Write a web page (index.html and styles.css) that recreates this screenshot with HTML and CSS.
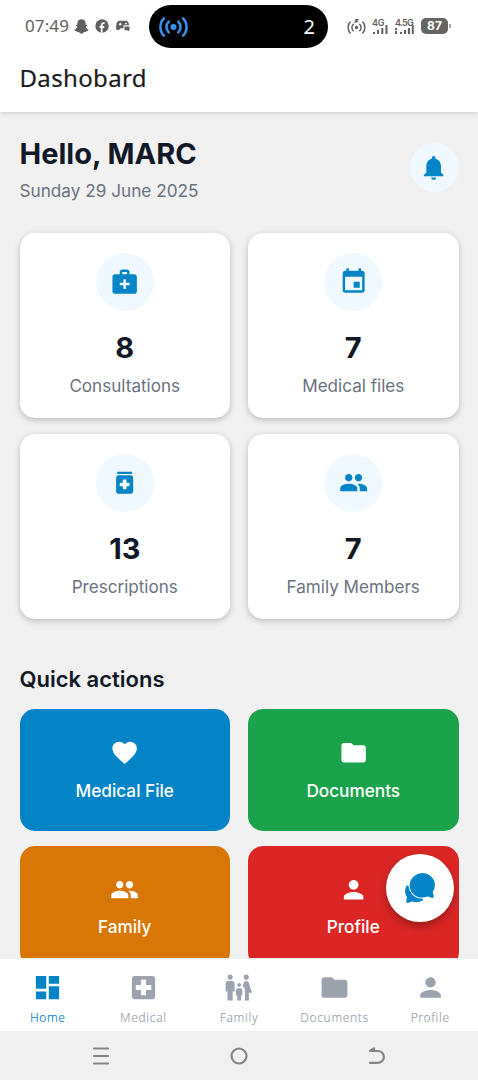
FILE: index.html
```html
<!DOCTYPE html>
<html lang="en">
<head>
<meta charset="utf-8">
<title>Dashobard</title>
<link rel="stylesheet" href="styles.css">
</head>
<body>
<svg class="defs" width="0" height="0" aria-hidden="true">
  <symbol id="bag" viewBox="0 0 24 24"><path d="M20 6h-4V4c0-1.1-.9-2-2-2h-4c-1.1 0-2 .9-2 2v2H4c-1.1 0-2 .9-2 2v12c0 1.1.9 2 2 2h16c1.1 0 2-.9 2-2V8c0-1.1-.9-2-2-2zM10 4h4v2h-4V4zm6 11h-3v3h-2v-3H8v-2h3v-3h2v3h3v2z"/></symbol>
  <symbol id="event" viewBox="0 0 24 24"><path d="M17 12h-5v5h5v-5zM16 1v2H8V1H6v2H5c-1.11 0-1.99.9-1.99 2L3 19c0 1.1.89 2 2 2h14c1.1 0 2-.9 2-2V5c0-1.1-.9-2-2-2h-1V1h-2zm3 18H5V8h14v11z"/></symbol>
  <symbol id="medication" viewBox="0 0 24 24"><path d="M6 3h12v2H6zm11 3H7c-1.1 0-2 .9-2 2v11c0 1.1.9 2 2 2h10c1.1 0 2-.9 2-2V8c0-1.1-.9-2-2-2zm-1 9h-2.5v2.5h-3V15H8v-3h2.5V9.5h3V12H16v3z"/></symbol>
  <symbol id="people" viewBox="0 0 24 24"><path d="M16 11c1.66 0 2.99-1.34 2.99-3S17.66 5 16 5c-1.66 0-3 1.34-3 3s1.34 3 3 3zm-8 0c1.66 0 2.99-1.34 2.99-3S9.66 5 8 5C6.34 5 5 6.34 5 8s1.34 3 3 3zm0 2c-2.33 0-7 1.17-7 3.5V19h14v-2.5c0-2.33-4.67-3.5-7-3.5zm8 0c-.29 0-.62.02-.97.05 1.16.84 1.97 1.97 1.97 3.45V19h6v-2.5c0-2.33-4.67-3.5-7-3.5z"/></symbol>
  <symbol id="bell" viewBox="0 0 24 24"><path d="M12 22c1.1 0 2-.9 2-2h-4c0 1.1.89 2 2 2zm6-6v-5c0-3.07-1.64-5.64-4.5-6.32V4c0-.83-.67-1.5-1.5-1.5s-1.5.67-1.5 1.5v.68C7.63 5.36 6 7.92 6 11v5l-2 2v1h16v-1l-2-2z"/></symbol>
  <symbol id="heart" viewBox="0 0 24 24"><path d="M12 21.35l-1.45-1.32C5.4 15.36 2 12.28 2 8.5 2 5.42 4.42 3 7.5 3c1.74 0 3.41.81 4.5 2.09C13.09 3.81 14.76 3 16.5 3 19.58 3 22 5.42 22 8.5c0 3.78-3.4 6.86-8.55 11.54L12 21.35z"/></symbol>
  <symbol id="folder" viewBox="0 0 24 24"><path d="M10 4H4c-1.1 0-1.99.9-1.99 2L2 18c0 1.1.9 2 2 2h16c1.1 0 2-.9 2-2V8c0-1.1-.9-2-2-2h-8l-2-2z"/></symbol>
  <symbol id="person" viewBox="0 0 24 24"><path d="M12 12c2.21 0 4-1.79 4-4s-1.79-4-4-4-4 1.79-4 4 1.79 4 4 4zm0 2c-2.67 0-8 1.34-8 4v2h16v-2c0-2.66-5.33-4-8-4z"/></symbol>
  <symbol id="dashboard" viewBox="0 0 24 24"><path d="M3 13h8V3H3v10zm0 8h8v-6H3v6zm10 0h8V11h-8v10zm0-18v6h8V3h-8z"/></symbol>
  <symbol id="hospital" viewBox="0 0 24 24"><path d="M19 3H5c-1.1 0-1.99.9-1.99 2L3 19c0 1.1.9 2 2 2h14c1.1 0 2-.9 2-2V5c0-1.1-.9-2-2-2zm-1 11h-4v4h-4v-4H6v-4h4V6h4v4h4v4z"/></symbol>
  <symbol id="restroom" viewBox="0 0 24 24"><path d="M16 4c0-1.11.89-2 2-2s2 .89 2 2-.89 2-2 2-2-.89-2-2zm4 18v-6h2.500l-2.540-7.630A2.010 2.010 0 0 0 18.060 7h-.12a2 2 0 0 0-1.900 1.370l-.86 2.580c1.080.6 1.820 1.730 1.820 3.050v8h3zm-7.500-10.500c.83 0 1.500-.67 1.500-1.500s-.67-1.500-1.500-1.500S11 9.170 11 10s.67 1.500 1.500 1.500zM5.500 6c1.110 0 2-.89 2-2s-.89-2-2-2-2 .89-2 2 .89 2 2 2zm2 16v-7H9V9c0-1.100-.9-2-2-2H4c-1.100 0-2 .9-2 2v6h1.500v7h4zm6.500 0v-4h1v-4c0-.82-.68-1.500-1.500-1.500h-2c-.82 0-1.500.68-1.500 1.500v4h1v4h3z"/></symbol>
  <symbol id="chat" viewBox="0 0 512 512"><path d="M439.900 405.600a26.770 26.770 0 0 1-9.590-2l-56.780-20.130-.42-.17a9.880 9.880 0 0 0-3.910-.76 10.320 10.320 0 0 0-3.620.66c-1.380.52-13.810 5.190-26.850 8.770-7.070 1.940-31.680 8.270-51.430 8.270-50.480 0-97.680-19.400-132.890-54.630A183.380 183.380 0 0 1 100.300 215.100a175.900 175.900 0 0 1 4.060-37.580c8.790-40.620 32.070-77.570 65.550-104A194.760 194.760 0 0 1 290.300 30.500c52.210 0 100.860 20 137 56.180 34.160 34.270 52.880 79.330 52.730 126.870a177.860 177.860 0 0 1-30.300 99.150l-.19.28-.74 1c-.17.23-.34.45-.5.68l-.15.27a21.630 21.630 0 0 0-1.080 2.090l15.740 55.940a26.420 26.420 0 0 1 1.120 7.110 24 24 0 0 1-24.030 25.530z"/><path d="M299.870 425.390a15.740 15.740 0 0 0-10.290-8.100c-5.780-1.530-12.520-1.270-17.670-1.650a201.780 201.780 0 0 1-128.820-58.750A199.210 199.210 0 0 1 86.400 244.160C85 234.420 85 232 85 232a16 16 0 0 0-28-10.580s-7.880 8.580-11.600 17.190a162.090 162.090 0 0 0 11 150.060C59 393 59 395 58.420 399.500c-2.730 14.110-7.510 39-10 51.910a24 24 0 0 0 8 22.920l.46.39A24.340 24.340 0 0 0 72 480a23.420 23.420 0 0 0 9-1.790l53.510-20.650a8.050 8.050 0 0 1 5.720 0c21.070 7.840 43 12 63.780 12a176 176 0 0 0 74.910-16.660c5.460-2.560 14-5.340 19-11.120a15 15 0 0 0 1.950-16.390z"/></symbol>
</svg>

<div class="screen">
  <div class="status">
    <div class="status-left">
      <span class="clock">07:49</span>
      <svg class="snap" viewBox="0 0 14 14"><path d="M7 .3c2.300 0 3.900 1.500 3.900 3.800v1.300c.7-.2 1.500 0 1.400.6-.1.500-.9.700-1.300 1 .5 1.600 1.400 2.500 2.700 3-.2.900-1 1.100-1.900 1.200-.3 1.200-1 .8-2 .9-.9.200-1.400 1.600-2.800 1.600s-1.900-1.400-2.800-1.600c-1-.1-1.700.3-2-.9C1.300 11.100.5 10.900.3 10c1.300-.5 2.200-1.400 2.700-3-.4-.3-1.200-.5-1.300-1-.1-.6.700-.8 1.400-.6V4.100C3.100 1.800 4.700.3 7 .3z"/></svg>
      <svg class="fb" viewBox="0 0 14 14"><circle cx="7" cy="7" r="6.700"/><path d="M6.700 13.700V6.100c0-1.500.8-2.100 2.900-1.900M4.500 8h4.700" fill="none" stroke="#fff" stroke-width="1.800"/></svg>
      <svg class="pad" viewBox="0 0 14 12"><path d="M3.300.8h6.500c1.900 0 3 1.500 3.300 4.500H7.500v3H4.700L3 10H1.200C0 10-.1 8 .2 6 .5 3 1.200.8 3.300.8z"/><path d="M2.800 4.200h2.800M4.200 2.800v2.800M9 3.600h1.800" stroke="#fff" stroke-width="1.100"/><path d="M8.500 6.500h5v3.700h-.7v1.300l-1.500-1.300H8.500z"/></svg>
    </div>
    <div class="island">
      <svg class="beacon" viewBox="0 0 32 24"><circle cx="16" cy="12" r="3.300" fill="#3791f0"/><path d="M10.800 6.200a8 8 0 0 0 0 11.600M21.200 6.200a8 8 0 0 1 0 11.600M5.500 2.500C.5 7.500.5 16.500 5.500 21.500M26.500 2.500c5 5 5 14 0 19" fill="none" stroke="#3791f0" stroke-width="2.800" stroke-linecap="round"/></svg>
      <span>2</span>
    </div>
    <div class="status-right">
      <svg class="hotspot" viewBox="0 0 18 16"><circle cx="9" cy="9" r="1.600"/><path d="M6.300 5.500a4.500 4.500 0 0 0 0 7M11.700 5.500a4.500 4.500 0 0 1 0 7M3.300 3.300c-3 3-3 8 0 11.300M14.700 3.300c3 3 3 8 0 11.300M7.800 1.500h2.200L8 3.600h2.200" fill="none" stroke="#606060" stroke-width="1.400"/></svg>
      <div class="signal"><span>4G</span><svg viewBox="0 0 16 9"><path d="M1 7h2v2H1zM5 5h2v4H5zM9.300 3h2v6h-2zM13.500 0h2v9h-2z"/></svg></div>
      <div class="signal wide"><span>4.5G</span><svg viewBox="0 0 19 9"><path d="M0 3h2v2H0zM0 6h2v3H0zM5 7h2v2H5zM9 5h2v4H9zM13 3h2v6h-2zM16.800 0h2v9h-2z"/></svg></div>
      <div class="battery"><span>87</span></div>
    </div>
  </div>

  <header class="topbar">Dashobard</header>

  <main class="content">
    <section class="greeting">
      <div>
        <h1>Hello, MARC</h1>
        <p>Sunday 29 June 2025</p>
      </div>
      <div class="bell"><svg class="icon"><use href="#bell"/></svg></div>
    </section>

    <section class="stats">
      <article class="stat"><div class="disc"><svg class="icon"><use href="#bag"/></svg></div><strong>8</strong><span>Consultations</span></article>
      <article class="stat"><div class="disc"><svg class="icon"><use href="#event"/></svg></div><strong>7</strong><span>Medical files</span></article>
      <article class="stat"><div class="disc"><svg class="icon"><use href="#medication"/></svg></div><strong>13</strong><span>Prescriptions</span></article>
      <article class="stat"><div class="disc"><svg class="icon"><use href="#people"/></svg></div><strong>7</strong><span>Family Members</span></article>
    </section>

    <h2>Quick actions</h2>
    <section class="actions">
      <div class="action blue"><svg class="icon"><use href="#heart"/></svg><span>Medical File</span></div>
      <div class="action green"><svg class="icon"><use href="#folder"/></svg><span>Documents</span></div>
      <div class="action orange"><svg class="icon"><use href="#people"/></svg><span>Family</span></div>
      <div class="action red"><svg class="icon"><use href="#person"/></svg><span>Profile</span></div>
    </section>
    <div class="fab"><svg><use href="#chat"/></svg></div>
  </main>

  <nav class="tabs">
    <div class="tab active"><svg><use href="#dashboard"/></svg><span>Home</span></div>
    <div class="tab"><svg><use href="#hospital"/></svg><span>Medical</span></div>
    <div class="tab"><svg><use href="#restroom"/></svg><span>Family</span></div>
    <div class="tab"><svg><use href="#folder"/></svg><span>Documents</span></div>
    <div class="tab"><svg><use href="#person"/></svg><span>Profile</span></div>
  </nav>

  <div class="system">
    <svg viewBox="0 0 20 20"><path d="M3 2.500h14M3 10h14M3 17.500h14"/></svg>
    <svg viewBox="0 0 20 20"><circle cx="10" cy="10" r="7.500"/></svg>
    <svg viewBox="0 0 20 20"><path d="M3.500 5h7.500a5.900 5.900 0 0 1 0 11.800H3M7 2.300L3 5h4z"/></svg>
  </div>
</div>
</body>
</html>
```

FILE: styles.css
```css
* { box-sizing: border-box; }
body { margin: 0; background: #f1f1f1; font-family: Inter, "Liberation Sans", sans-serif; }
h1, h2, p { margin: 0; }
svg { display: block; flex: none; fill: currentColor; }
.defs { position: absolute; }
.screen { display: flex; flex-direction: column; width: 478px; height: 1080px; overflow: hidden; }

.status { position: relative; z-index: 2; display: grid; grid-template-columns: 149px 179px 1fr; height: 52px; background: #fff; color: #606060; }
.status-left { display: flex; align-items: center; padding-left: 25px; }
.clock { width: 49px; font: 400 17px/20px "Noto Sans", sans-serif; letter-spacing: 0.1px; color: #606060; }
.snap { width: 15px; height: 15px; }
.fb { width: 14px; height: 14px; margin-left: 6px; }
.pad { width: 14px; height: 12px; margin-left: 7px; }
.island { display: flex; align-items: center; justify-content: space-between; height: 43px; margin-top: 5px; padding: 0 13px 0 9px; border-radius: 22px; background: #000; color: #fff; font: 400 20px/24px "Noto Sans", sans-serif; }
.beacon { width: 31px; height: 22px; }
.status-right { display: flex; align-items: center; padding-left: 19px; }
.hotspot { width: 19px; height: 17px; }
.signal { display: flex; flex-direction: column; width: 16px; margin-left: 6px; font: 600 9px/7px Inter, sans-serif; letter-spacing: -0.3px; }
.signal svg { width: 16px; height: 9px; margin-top: -1px; }
.signal.wide { width: 19px; margin-left: 7px; letter-spacing: -0.7px; }
.signal.wide svg { width: 19px; }
.battery { position: relative; width: 27px; height: 16px; margin-left: 7px; border-radius: 5px; background: #656565; color: #fff; text-align: center; font: 700 12px/16px Inter, sans-serif; }
.battery::after { content: ""; position: absolute; right: -3px; top: 6px; width: 2px; height: 4px; background: #aaa; }

.topbar { position: relative; z-index: 1; height: 60px; padding-left: 19.500px; background: #fff; color: #1c1c1e; font: 400 24px/52px "Noto Sans", sans-serif; letter-spacing: 0.35px; -webkit-text-stroke: 0.2px #1c1c1e; box-shadow: 0 1px 5px rgba(0, 0, 0, .17); }

.content { position: relative; flex: 1; min-height: 0; overflow: hidden; padding: 24px 19.500px 0; }
.greeting { display: flex; justify-content: space-between; height: 97px; }
h1 { font-size: 29px; line-height: 35px; font-weight: 700; color: #111827; }
.greeting p { margin-top: 9px; font-size: 17.200px; line-height: 22px; color: #6b7280; }
.bell { display: grid; place-items: center; width: 49px; height: 49px; margin-top: 7px; border-radius: 50%; background: #f0f9ff; color: #0284c7; }
.icon { width: 29.300px; height: 29.300px; }

.stats, .actions { display: grid; grid-template-columns: 210.500px 210.500px; justify-content: space-between; }
.stats { row-gap: 16px; }
.stat { display: flex; flex-direction: column; align-items: center; height: 185px; padding-top: 20px; border-radius: 15px; background: #fff; box-shadow: 0 2px 6px rgba(0, 0, 0, .23); }
.disc { display: grid; place-items: center; width: 58px; height: 58px; border-radius: 50%; background: #f0f9ff; color: #0284c7; }
.stat strong { margin-top: 19px; font-size: 29px; line-height: 36px; font-weight: 700; color: #111827; }
.stat span { margin-top: 9px; font-size: 17.100px; line-height: 22px; color: #6b7280; }

h2 { margin-top: 46px; font-size: 22px; line-height: 28px; font-weight: 600; color: #111827; }
.actions { margin-top: 16px; row-gap: 15px; }
.action { display: flex; flex-direction: column; align-items: center; height: 121.500px; padding-top: 29px; border-radius: 15px; color: #fff; }
.action span { margin-top: 12.500px; font-size: 17.200px; line-height: 22px; font-weight: 500; }
.blue { background: #0284c7; }
.green { background: #1aa34a; }
.orange { background: #d97706; }
.red { background: #dc2626; }
.fab { position: absolute; right: 24.500px; bottom: 36.500px; display: grid; place-items: center; width: 68px; height: 68px; border-radius: 50%; background: #fff; color: #0284c7; box-shadow: 0 4px 8px rgba(0, 0, 0, .3); }
.fab svg { width: 34px; height: 34px; }

.tabs { display: grid; grid-template-columns: repeat(5, 1fr); height: 73px; background: #fff; color: #9ca3af; border-top: 1px solid #f0f0f0; }
.tab { display: flex; flex-direction: column; align-items: center; padding-top: 12.500px; }
.tab svg { width: 31px; height: 31px; }
.tab span { margin-top: 6px; font: 300 12px/17px "Noto Sans", sans-serif; letter-spacing: 0.65px; -webkit-text-stroke: 0.15px currentColor; }
.tab.active { color: #0284c7; }

.system { display: grid; grid-template-columns: 20px 20px 20px; justify-content: center; align-items: center; column-gap: 118px; height: 49px; background: #f0f0f0; }
.system svg { width: 20px; height: 20px; fill: none; stroke: #858585; stroke-width: 2.200; stroke-linecap: round; stroke-linejoin: round; }
```
